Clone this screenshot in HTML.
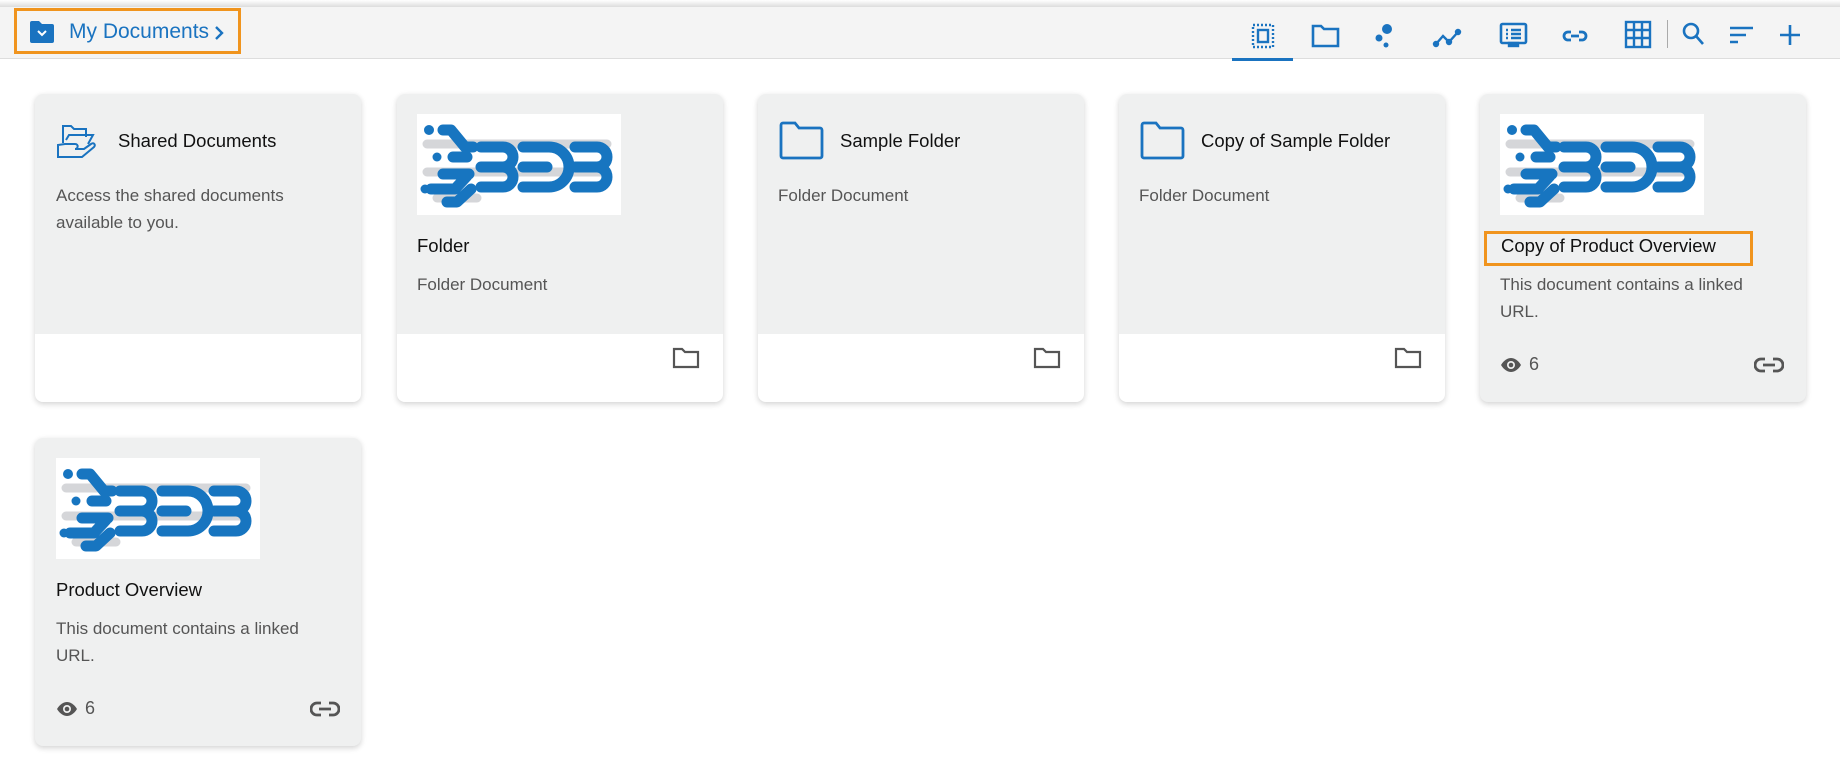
<!DOCTYPE html>
<html><head><meta charset="utf-8"><style>
*{box-sizing:border-box;margin:0;padding:0}
body{width:1840px;height:773px;background:#fff;font-family:"Liberation Sans",sans-serif;position:relative;overflow:hidden}
.top{position:absolute;left:0;top:0;width:1840px;height:8px;background:linear-gradient(#fff,#d8d8d8)}
.bar{position:absolute;left:0;top:7px;width:1840px;height:52px;background:#f4f4f4;border-bottom:1px solid #ddd}
.ob{position:absolute;border:3px solid #f0941e}
.card{position:absolute;width:326px;background:#eff0f0;border-radius:8px;box-shadow:0 2px 6px rgba(0,0,0,.18);overflow:hidden}
.foot{position:absolute;left:0;right:0;bottom:0;height:68px;background:#fff}
.t{position:absolute;font-size:18.5px;color:#111}
.d{position:absolute;font-size:17px;color:#555;line-height:27px}
.img{position:absolute;width:204px;height:101px;background:#fff}
.ic{position:absolute}
</style></head><body>
<svg width="0" height="0" style="position:absolute"><defs><symbol id="logo" viewBox="0 0 204 101"><g stroke="#d5d6d9" stroke-width="9" stroke-linecap="round"><path d="M10 30H190M10 58H190M20 84H60"/></g><g fill="none" stroke="#1775c0" stroke-width="11" stroke-linecap="round" stroke-linejoin="round"><path d="M26 16H34L48 33H56M36 43H50M26 60H52M14 75H38L50 62M30 88H40L54 75"/><path d="M64 33H86A10 10 0 0 1 86 53H64M86 53A10 10 0 0 1 86 73H64"/><path d="M106 33H132A20 20 0 0 1 132 73H106M106 53H130"/><path d="M158 33H180A10 10 0 0 1 180 53H158M180 53A10 10 0 0 1 180 73H158"/></g><circle cx="12" cy="16" r="5" fill="#1775c0"/><circle cx="20" cy="43" r="4.5" fill="#1775c0"/><circle cx="8" cy="75" r="4.5" fill="#1775c0"/></symbol></defs></svg>
<div class="top"></div>
<div class="bar"></div>
<div class="ob" style="left:14px;top:8px;width:227px;height:46px"></div>
<svg class="ic" style="left:28px;top:20px" width="28" height="24" viewBox="0 0 28 24"><path d="M2 3a2 2 0 0 1 2-2h7l3 3h10a2 2 0 0 1 2 2v15a2 2 0 0 1-2 2H4a2 2 0 0 1-2-2z" fill="#1a73c0"/><path d="M10 11l4 4 4-4" stroke="#fff" stroke-width="2" fill="none"/></svg>
<div style="position:absolute;left:69px;top:20px;font-size:21px;color:#1a73c0">My Documents</div>
<svg class="ic" style="left:213px;top:25px" width="12" height="16" viewBox="0 0 12 16"><path d="M3 2l6 6-6 6" stroke="#1a73c0" stroke-width="2.4" fill="none"/></svg>

<div style="position:absolute;left:1232px;top:58px;width:61px;height:3px;background:#1a73c0"></div>
<svg class="ic" style="left:1240px;top:18px" width="440" height="36" viewBox="0 0 440 36" fill="none" stroke="#1a73c0" stroke-width="2.4">
<rect x="13" y="7" width="20" height="22" stroke-dasharray="2 2"/><rect x="18" y="12" width="10" height="12"/>
<path d="M73 8h8l3 3h14v17H73z" stroke-width="2.6"/>
<circle cx="147" cy="11" r="5" fill="#1a73c0" stroke="none"/><circle cx="139" cy="20" r="3.5" fill="#1a73c0" stroke="none"/><circle cx="146" cy="27" r="2.5" fill="#1a73c0" stroke="none"/>
<path d="M196 26l7-8 6 6 9-10"/><circle cx="196" cy="26" r="2" fill="#1a73c0"/><circle cx="209" cy="24" r="2" fill="#1a73c0"/><circle cx="218" cy="14" r="2" fill="#1a73c0"/>
<rect x="261" y="6" width="25" height="19" rx="1.5" stroke-width="2.6"/><path d="M266 12h2M271 12h10M266 16h2M271 16h10M266 20h2M271 20h10"/><rect x="269" y="25" width="9" height="3" fill="#1a73c0"/>
<path d="M331 14h-3a4 4 0 0 0 0 8h3M339 14h3a4 4 0 0 1 0 8h-3M331 18h8" stroke-width="2.8"/>
<rect x="386" y="4" width="24" height="25"/><path d="M394 4v25M402 4v25M386 12h24M386 20h24"/>
</svg>
<div style="position:absolute;left:1667px;top:20px;width:1px;height:28px;background:#aaa"></div>
<svg class="ic" style="left:1680px;top:20px" width="130" height="30" viewBox="0 0 130 30" fill="none" stroke="#1a73c0" stroke-width="2.6">
<circle cx="11" cy="11" r="7"/><path d="M16 16l7 8"/>
<path d="M50 8h23M50 15h16M50 22h8"/>
<path d="M110 5v20M100 15h20"/>
</svg>

<div class="card" style="left:35px;top:94px;height:308px"><div class="foot"></div>
<svg class="ic" style="left:21px;top:29px" width="40" height="36" viewBox="0 0 40 36" fill="none" stroke="#1a73c0" stroke-width="2"><path d="M7 20V3h8l3 3h12v8"/><path d="M2 22v12h24l12-10c2-2 0-5-3-3l-7 5h-9c3 0 4-5 0-5H9z"/><path d="M10 17l3-5h24l-5 9"/></svg>
<div class="t" style="left:83px;top:36px">Shared Documents</div>
<div class="d" style="left:21px;top:88px">Access the shared documents<br>available to you.</div></div>

<div class="card" style="left:397px;top:94px;height:308px"><div class="foot"></div>
<div class="img" style="left:20px;top:20px"><svg width="204" height="101"><use href="#logo"/></svg></div>
<div class="t" style="left:20px;top:141px">Folder</div>
<div class="d" style="left:20px;top:177px">Folder Document</div>
<svg class="ic" style="left:275px;top:253px" width="28" height="22" viewBox="0 0 28 22" fill="none" stroke="#555" stroke-width="2.2"><path d="M2 2h8l3 3h13v15H2z"/></svg></div>

<div class="card" style="left:758px;top:94px;height:308px"><div class="foot"></div>
<svg class="ic" style="left:20px;top:27px" width="48" height="40" viewBox="0 0 48 40" fill="none" stroke="#1a73c0" stroke-width="2.8"><path d="M3 4a2 2 0 0 1 2-2h12l4 5h21a2 2 0 0 1 2 2v26a2 2 0 0 1-2 2H5a2 2 0 0 1-2-2z"/></svg>
<div class="t" style="left:82px;top:36px">Sample Folder</div>
<div class="d" style="left:20px;top:88px">Folder Document</div>
<svg class="ic" style="left:275px;top:253px" width="28" height="22" viewBox="0 0 28 22" fill="none" stroke="#555" stroke-width="2.2"><path d="M2 2h8l3 3h13v15H2z"/></svg></div>

<div class="card" style="left:1119px;top:94px;height:308px"><div class="foot"></div>
<svg class="ic" style="left:20px;top:27px" width="48" height="40" viewBox="0 0 48 40" fill="none" stroke="#1a73c0" stroke-width="2.8"><path d="M3 4a2 2 0 0 1 2-2h12l4 5h21a2 2 0 0 1 2 2v26a2 2 0 0 1-2 2H5a2 2 0 0 1-2-2z"/></svg>
<div class="t" style="left:82px;top:36px">Copy of Sample Folder</div>
<div class="d" style="left:20px;top:88px">Folder Document</div>
<svg class="ic" style="left:275px;top:253px" width="28" height="22" viewBox="0 0 28 22" fill="none" stroke="#555" stroke-width="2.2"><path d="M2 2h8l3 3h13v15H2z"/></svg></div>

<div class="card" style="left:1480px;top:94px;height:308px">
<div class="img" style="left:20px;top:20px"><svg width="204" height="101"><use href="#logo"/></svg></div>
<div class="t" style="left:21px;top:141px">Copy of Product Overview</div>
<div class="d" style="left:20px;top:177px">This document contains a linked<br>URL.</div>
<svg class="ic" style="left:20px;top:264px" width="22" height="14" viewBox="0 0 22 14"><path d="M1 7C4 2 8 0 11 0s7 2 10 7c-3 5-7 7-10 7S4 12 1 7z" fill="#555"/><circle cx="11" cy="7" r="4" fill="#eff0f0"/><circle cx="11" cy="7" r="2.3" fill="#555"/></svg>
<div class="d" style="left:49px;top:257px;font-size:18px">6</div>
<svg class="ic" style="left:274px;top:263px" width="30" height="16" viewBox="0 0 30 16" fill="none" stroke="#555" stroke-width="2.8"><path d="M11 2H7a6 6 0 0 0 0 12h4M19 2h4a6 6 0 0 1 0 12h-4M9 8h12"/></svg></div>
<div class="ob" style="left:1484px;top:231px;width:269px;height:35px"></div>

<div class="card" style="left:35px;top:438px;height:308px">
<div class="img" style="left:21px;top:20px"><svg width="204" height="101"><use href="#logo"/></svg></div>
<div class="t" style="left:21px;top:141px">Product Overview</div>
<div class="d" style="left:21px;top:177px">This document contains a linked<br>URL.</div>
<svg class="ic" style="left:21px;top:264px" width="22" height="14" viewBox="0 0 22 14"><path d="M1 7C4 2 8 0 11 0s7 2 10 7c-3 5-7 7-10 7S4 12 1 7z" fill="#555"/><circle cx="11" cy="7" r="4" fill="#eff0f0"/><circle cx="11" cy="7" r="2.3" fill="#555"/></svg>
<div class="d" style="left:50px;top:257px;font-size:18px">6</div>
<svg class="ic" style="left:275px;top:263px" width="30" height="16" viewBox="0 0 30 16" fill="none" stroke="#555" stroke-width="2.8"><path d="M11 2H7a6 6 0 0 0 0 12h4M19 2h4a6 6 0 0 1 0 12h-4M9 8h12"/></svg></div>
</body></html>
